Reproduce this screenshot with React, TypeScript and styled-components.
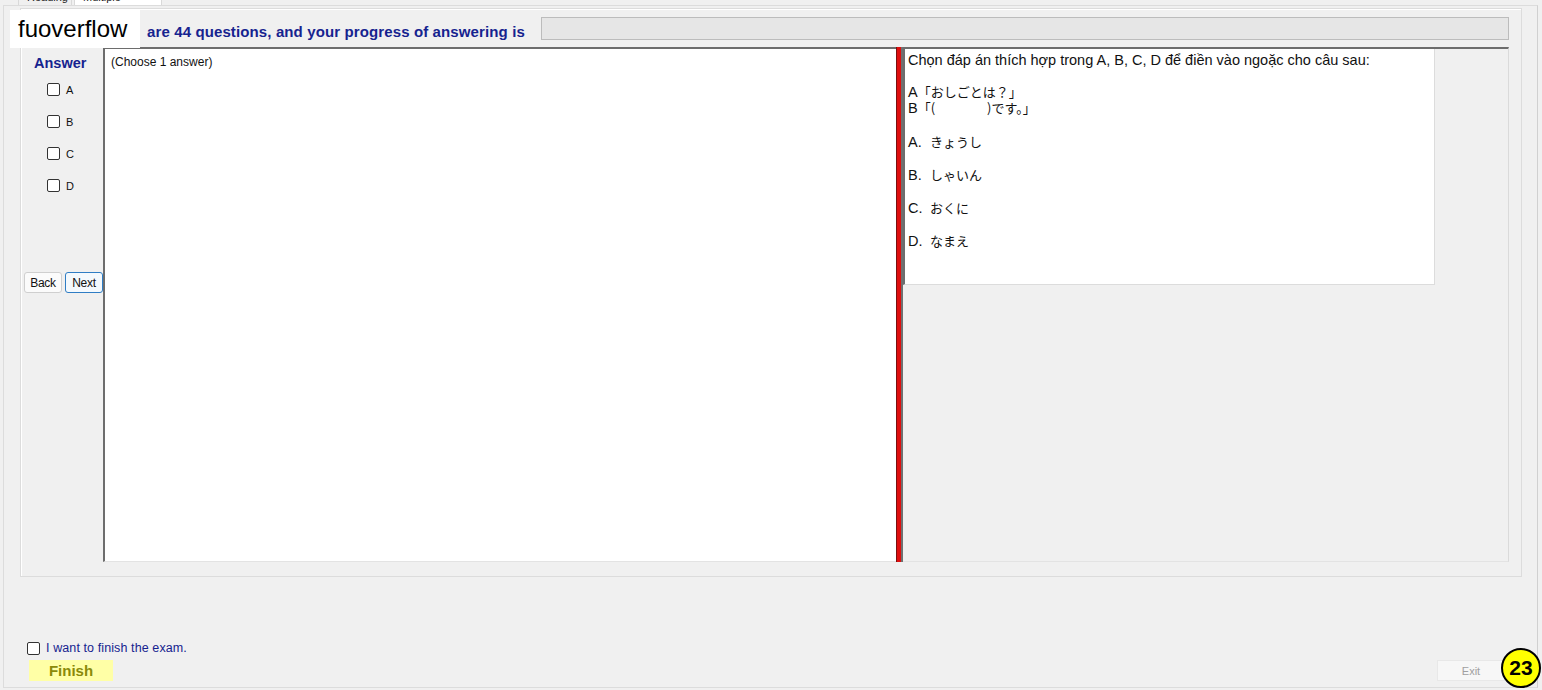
import React from 'react';
import styled, {createGlobalStyle} from "styled-components";

const GlobalStyle = createGlobalStyle`
  html, body {
    margin: 0;
    padding: 0;
    background: #f0f0f0;
  }
  body {
    font-family: "Liberation Sans", "Noto Sans CJK JP", Arial, sans-serif;
  }
`

const answers = ['A', 'B', 'C', 'D']

const choices = [
    {key: 'A.', text: 'きょうし'},
    {key: 'B.', text: 'しゃいん'},
    {key: 'C.', text: 'おくに'},
    {key: 'D.', text: 'なまえ'},
]

export default function App() {
    return (
        <>
            <GlobalStyle/>
            <StyledPage>
                <TabStrip>
                    <Tab>Reading</Tab>
                    <Tab active>Multiple</Tab>
                </TabStrip>

                <TabPage>
                    <GroupBox>
                        <HeaderRow>
                            <HeaderText>are 44 questions, and your progress of answering is</HeaderText>
                            <ProgressBar/>
                        </HeaderRow>

                        <BodyRow>
                            <AnswerColumn>
                                <AnswerTitle>Answer</AnswerTitle>
                                <AnswerList>
                                    {answers.map(a => (
                                        <AnswerItem key={a}>
                                            <CheckBox type="checkbox"/>
                                            <span>{a}</span>
                                        </AnswerItem>
                                    ))}
                                </AnswerList>
                                <NavButtons>
                                    <NavButton>Back</NavButton>
                                    <NavButton focused>Next</NavButton>
                                </NavButtons>
                            </AnswerColumn>

                            <QuestionBox>(Choose 1 answer)</QuestionBox>

                            <Splitter/>

                            <RightPane>
                                <ContentBox>
                                    <Line>Chọn đáp án thích hợp trong A, B, C, D để điền vào ngoặc cho câu sau:</Line>
                                    <Line>&nbsp;</Line>
                                    <Line>A<Jp>「おしごとは？」</Jp></Line>
                                    <Line>B<Jp>「(　　　　)です。」</Jp></Line>
                                    <ChoiceList>
                                        {choices.map(c => (
                                            <Choice key={c.key}>
                                                <ChoiceKey>{c.key}</ChoiceKey><Jp>{c.text}</Jp>
                                            </Choice>
                                        ))}
                                    </ChoiceList>
                                </ContentBox>
                            </RightPane>
                        </BodyRow>
                    </GroupBox>

                    <Footer>
                        <FinishArea>
                            <FinishCheck>
                                <CheckBox type="checkbox"/>
                                <span>I want to finish the exam.</span>
                            </FinishCheck>
                            <FinishButton>Finish</FinishButton>
                        </FinishArea>
                        <ExitButton>Exit</ExitButton>
                    </Footer>
                </TabPage>

                <Logo>fuoverflow</Logo>
                <Badge>23</Badge>
            </StyledPage>
        </>
    );
}

const StyledPage = styled.div`
  position: relative;
  width: 1542px;
  height: 690px;
  overflow: hidden;
  background: #f0f0f0;
  display: flex;
  flex-direction: column;
`

const TabStrip = styled.div`
  height: 5px;
  display: flex;
  align-items: flex-end;
  padding-left: 18px;
  gap: 2px;
  overflow: hidden;
`

const Tab = styled.div<{ active?: boolean }>`
  flex-shrink: 0;
  height: 20px;
  padding: 0 8px 2px;
  width: ${p => p.active ? '70px' : '36px'};
  box-sizing: content-box;
  display: flex;
  align-items: flex-end;
  font-size: 11px;
  color: #222;
  background: ${p => p.active ? '#ffffff' : '#f0f0f0'};
  border: 1px solid #d9d9d9;
  border-bottom: none;
`

const TabPage = styled.div`
  flex: 1;
  margin: 0 4px 2px 3px;
  border: 1px solid #dcdcdc;
  border-right-color: #d0d0d0;
  background: #f0f0f0;
  display: flex;
  flex-direction: column;
`

const GroupBox = styled.div`
  margin: 2px 15px 0 16px;
  height: 569px;
  box-sizing: border-box;
  border: 1px solid #dcdcdc;
  box-shadow: inset 1px 1px 0 #ffffff;
  padding: 8px 12px 14px 3px;
  display: flex;
  flex-direction: column;
  gap: 7px;
`

const HeaderRow = styled.div`
  height: 23px;
  display: flex;
  align-items: center;
  gap: 16px;
  padding-left: 123px;
`

const HeaderText = styled.span`
  font-weight: bold;
  font-size: 15px;
  letter-spacing: 0.12px;
  color: #16238f;
  white-space: nowrap;
  padding-top: 5px;
`

const ProgressBar = styled.div`
  flex: 1;
  height: 23px;
  box-sizing: border-box;
  background: #e6e6e6;
  border: 1px solid #bcbcbc;
`

const BodyRow = styled.div`
  flex: 1;
  display: flex;
  min-height: 0;
`

const AnswerColumn = styled.div`
  width: 79px;
  display: flex;
  flex-direction: column;
`

const AnswerTitle = styled.div`
  font-weight: bold;
  font-size: 14.5px;
  color: #16238f;
  padding: 8px 0 0 10px;
  height: 20px;
`

const AnswerList = styled.div`
  display: flex;
  flex-direction: column;
  gap: 19px;
  padding: 8px 0 0 23px;
`

const AnswerItem = styled.label`
  display: flex;
  align-items: center;
  gap: 6px;
  height: 13px;
  font-size: 11px;
  color: #111;
`

const CheckBox = styled.input`
  appearance: none;
  margin: 0;
  width: 13px;
  height: 13px;
  box-sizing: border-box;
  border: 1px solid #333333;
  border-radius: 2px;
  background: #ffffff;
  flex-shrink: 0;
`

const NavButtons = styled.div`
  display: flex;
  gap: 3px;
  margin-top: 80px;
`

const NavButton = styled.button<{ focused?: boolean }>`
  width: 38px;
  height: 21px;
  padding: 0;
  font-family: "Liberation Sans", Arial, sans-serif;
  font-size: 12px;
  letter-spacing: -0.3px;
  color: #111;
  background: ${p => p.focused ? '#f4f9fd' : '#fbfbfb'};
  border: 1px solid ${p => p.focused ? '#2f7dc4' : '#cfcfcf'};
  border-radius: 3px;
`

const QuestionBox = styled.div`
  width: 793px;
  box-sizing: border-box;
  background: #ffffff;
  border-top: 2px solid #6d6d6d;
  border-left: 2px solid #6d6d6d;
  border-bottom: 1px solid #e3e3e3;
  padding: 6px 6px;
  font-size: 12px;
  color: #111;
`

const Splitter = styled.div`
  width: 7px;
  box-sizing: border-box;
  background: #e00e0e;
  border-left: 1px solid #7a1010;
  border-right: 2px solid #707070;
`

const RightPane = styled.div`
  flex: 1;
  border-top: 2px solid #6d6d6d;
  border-right: 1px solid #dadada;
  border-bottom: 1px solid #e3e3e3;
  background: #f0f0f0;
`

const ContentBox = styled.div`
  width: 532px;
  height: 236px;
  box-sizing: border-box;
  background: #ffffff;
  border-left: 2px solid #6d6d6d;
  border-right: 1px solid #dcdcdc;
  border-bottom: 1px solid #dcdcdc;
  padding: 3px 3px;
  font-size: 14.5px;
  color: #111;
`

const Line = styled.div`
  line-height: 16px;
  white-space: pre;
`

const Jp = styled.span`
  font-family: "Noto Sans CJK JP", "Liberation Sans", sans-serif;
  font-size: 13px;
  color: #111;
`

const ChoiceList = styled.div`
  display: flex;
  flex-direction: column;
  gap: 17px;
  margin-top: 18px;
`

const Choice = styled.div`
  line-height: 16px;
`

const ChoiceKey = styled.span`
  display: inline-block;
  width: 22px;
`

const Footer = styled.div`
  flex: 1;
  display: flex;
  justify-content: space-between;
  align-items: flex-end;
  padding: 0 32px 6px 23px;
`

const FinishArea = styled.div`
  display: flex;
  flex-direction: column;
  gap: 5px;
`

const FinishCheck = styled.label`
  display: flex;
  align-items: center;
  gap: 6px;
  font-size: 12.5px;
  letter-spacing: 0.1px;
  color: #16238f;
`

const FinishButton = styled.button`
  width: 84px;
  height: 21px;
  margin-left: 2px;
  padding: 0;
  font-family: "Liberation Sans", Arial, sans-serif;
  font-size: 15px;
  font-weight: bold;
  color: #8a8a0a;
  background: #ffffa6;
  border: none;
`

const ExitButton = styled.button`
  width: 68px;
  height: 21px;
  padding: 0;
  font-family: "Liberation Sans", Arial, sans-serif;
  font-size: 11px;
  color: #a0a0a0;
  background: #f7f7f7;
  border: 1px solid #e8e8e8;
`

const Logo = styled.div`
  position: absolute;
  left: 10px;
  top: 10px;
  width: 130px;
  height: 38px;
  background: #ffffff;
  display: flex;
  align-items: center;
  padding-left: 8px;
  box-sizing: border-box;
  font-family: "Liberation Sans", Arial, sans-serif;
  font-size: 24px;
  color: #000;
`

const Badge = styled.div`
  position: absolute;
  right: 1px;
  bottom: 2px;
  width: 36px;
  height: 36px;
  border-radius: 50%;
  background: #ffff00;
  border: 2px solid #000;
  display: flex;
  align-items: center;
  justify-content: center;
  font-family: "Liberation Sans", Arial, sans-serif;
  font-weight: bold;
  font-size: 21px;
  color: #000;
`
